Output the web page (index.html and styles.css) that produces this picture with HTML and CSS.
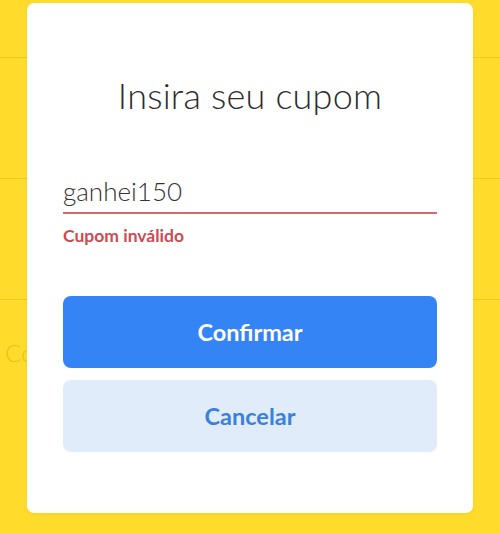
FILE: index.html
```html
<!DOCTYPE html>
<html lang="pt-BR">
<head>
  <meta charset="UTF-8" />
  <meta name="viewport" content="width=device-width, initial-scale=1.0"/>
  <title>Cupom</title>
  <link rel="stylesheet" href="styles.css">
</head>
<body>

<!-- page behind the overlay -->
<div class="page">
  <div class="row row-top"></div>
  <div class="row"></div>
  <div class="row"></div>
  <div class="row row-coupon"><span class="ghost">Código</span></div>
</div>

<div class="modal">
  <h2 class="modal-title">Insira seu cupom</h2>

  <div class="field">
    <input type="text" id="coupon" value="ganhei150">
    <p class="field-error">Cupom inválido</p>
  </div>

  <div class="actions">
    <button type="button" class="btn btn-primary">Confirmar</button>
    <button type="button" class="btn btn-secondary">Cancelar</button>
  </div>
</div>

</body>
</html>
```

FILE: styles.css
```css
body {
  font-family: 'Lato', 'Open Sans', sans-serif;
  margin: 0;
  background: #ffdc2b;
  color: #333;
  height: 533px;
  overflow: hidden;
}
.page {
  opacity: 0.12;
}
.row {
  height: 120px;
  border-bottom: 1px solid #5a4a00;
  display: flex;
  align-items: center;
  padding: 0 5px;
}
.row-top {
  height: 57px;
}
.row-coupon {
  border-bottom: none;
}
.ghost {
  font-size: 24px;
  font-weight: 300;
  color: #000;
  margin-top: -16px;
}
.modal {
  position: absolute;
  left: 27px;
  top: 3px;
  width: 446px;
  height: 510px;
  background: #fff;
  border-radius: 7px;
  box-sizing: border-box;
  padding: 0 36px;
  box-shadow: 0 1px 4px rgba(0, 0, 0, 0.06);
}
.modal-title {
  margin: 70px 0 0;
  text-align: center;
  font-weight: 300;
  font-size: 36px;
  letter-spacing: 0.2px;
  color: #2c2c2c;
  line-height: 44px;
}
.field {
  margin-top: 57px;
}
.field input {
  display: block;
  width: 100%;
  box-sizing: border-box;
  border: none;
  border-bottom: 2px solid #d86866;
  padding: 0 0 4px;
  font-family: inherit;
  font-size: 26px;
  font-weight: 300;
  color: #333;
  outline: none;
  line-height: 34px;
}
.field-error {
  margin: 11px 0 0;
  font-size: 17.5px;
  font-weight: 700;
  color: #cf4a52;
}
.actions {
  margin-top: 50px;
  display: flex;
  flex-direction: column;
  gap: 12px;
}
.btn {
  height: 72px;
  border: none;
  border-radius: 8px;
  font-family: inherit;
  font-size: 23.5px;
  font-weight: 700;
  cursor: pointer;
}
.btn-primary {
  background: #3584f6;
  color: #fff;
}
.btn-secondary {
  background: #e1ecfa;
  color: #3a80dc;
}
```
